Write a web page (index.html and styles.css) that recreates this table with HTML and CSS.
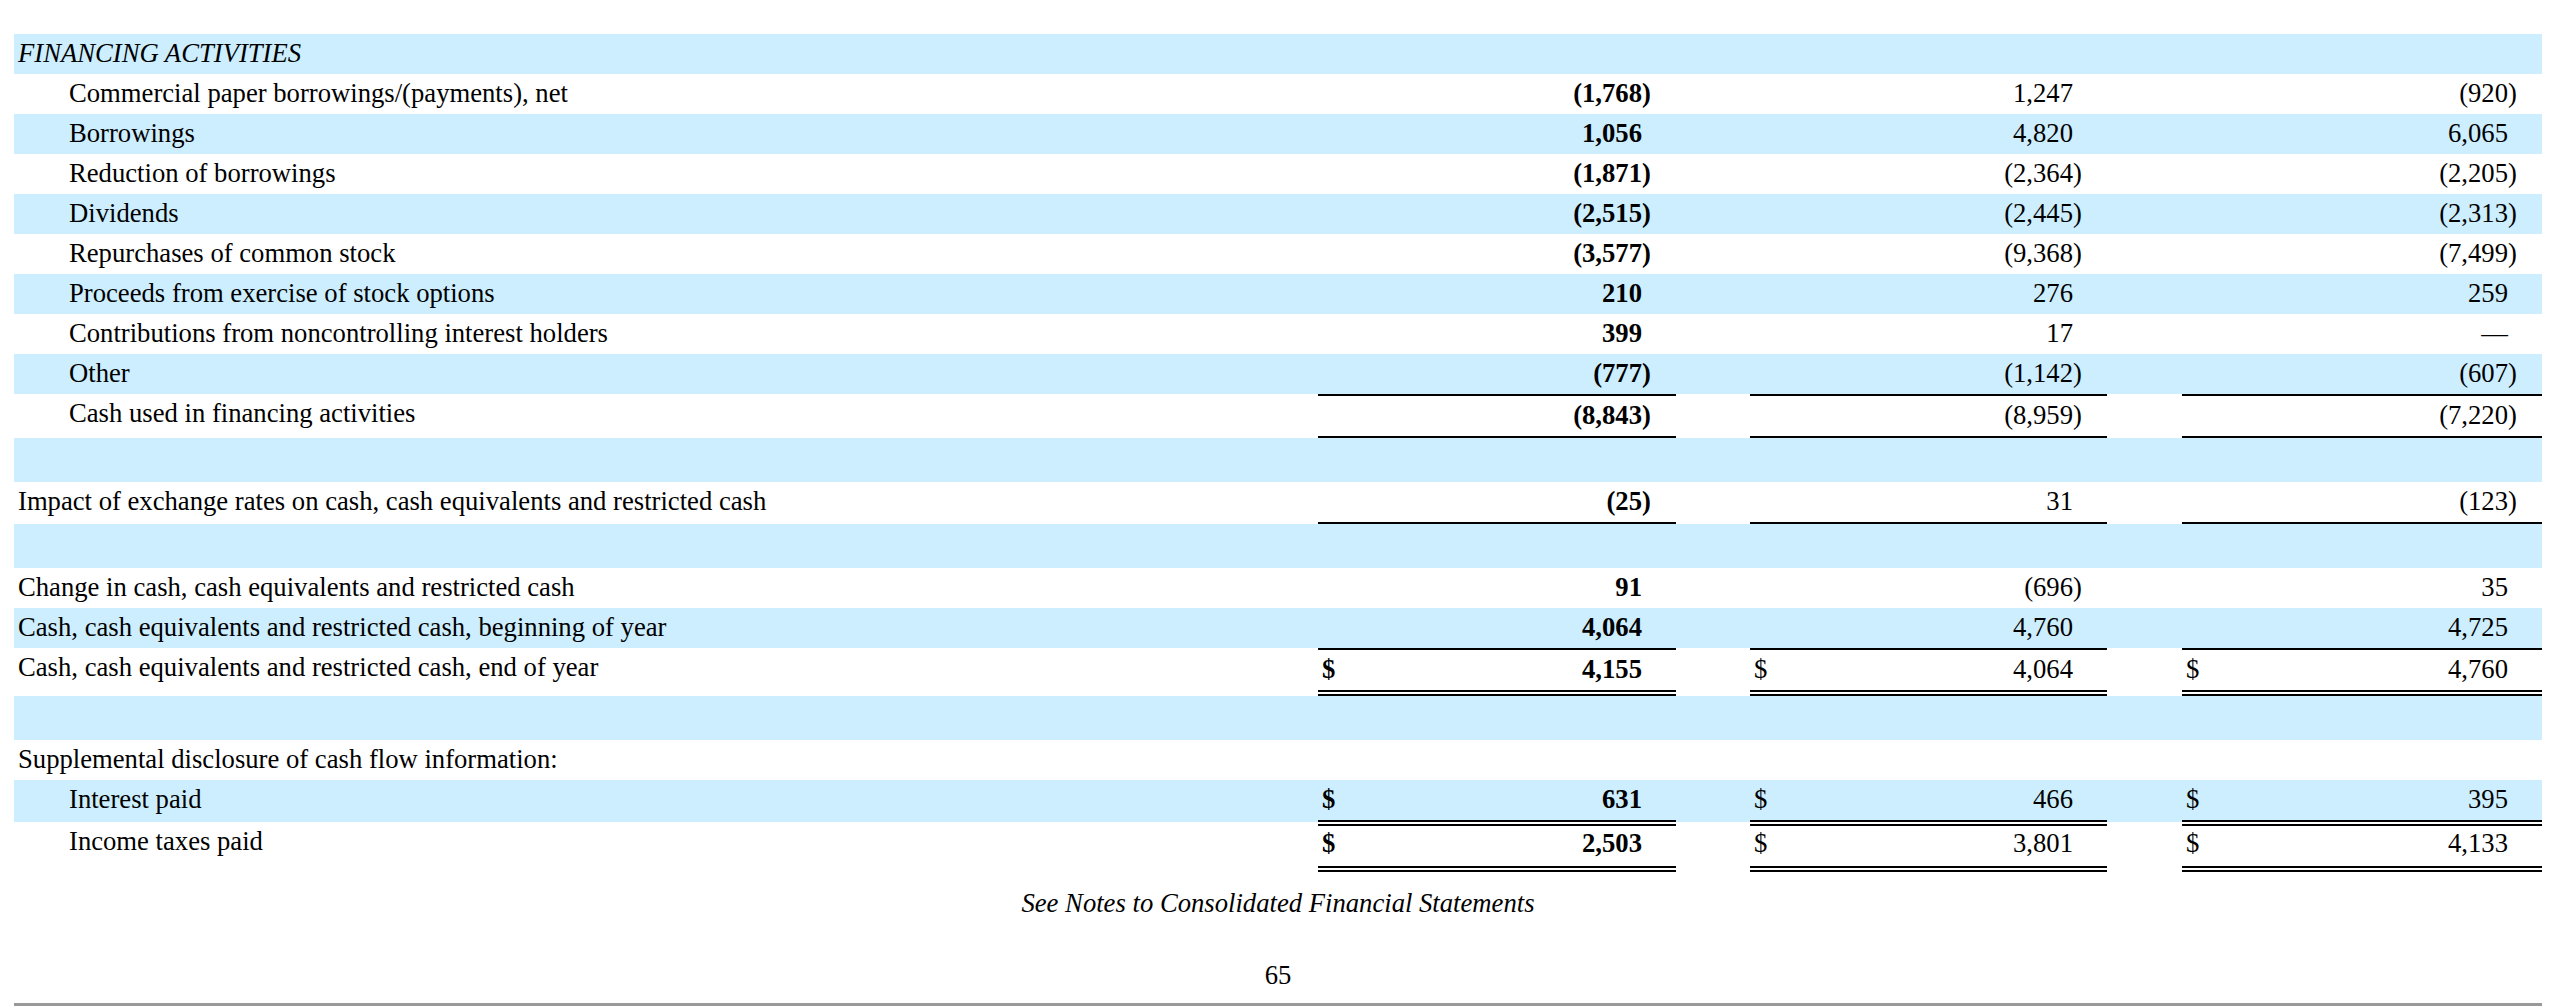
FILE: index.html
```html
<!DOCTYPE html>
<html lang="en">
<head>
<meta charset="utf-8">
<title>Consolidated Statements of Cash Flows (continued)</title>
<link rel="stylesheet" href="styles.css">
</head>
<body>
<div class="page">
  <table class="fin">
    <colgroup>
      <col class="w-lbl">
      <col class="w-cur"><col class="w-num1"><col class="w-par">
      <col class="w-gap1">
      <col class="w-cur"><col class="w-num2"><col class="w-par">
      <col class="w-gap2">
      <col class="w-cur"><col class="w-num3"><col class="w-par">
    </colgroup>
    <tbody>
      <tr class="b">
        <td class="lbl it">FINANCING ACTIVITIES</td>
        <td class="cur"></td><td class="num"></td><td class="par"></td><td></td>
        <td class="cur"></td><td class="num"></td><td class="par"></td><td></td>
        <td class="cur"></td><td class="num"></td><td class="par"></td>
      </tr>
      <tr>
        <td class="lbl ind">Commercial paper borrowings/(payments), net</td>
        <td class="cur cy"></td><td class="num cy">(1,768</td><td class="par cy">)</td><td></td>
        <td class="cur"></td><td class="num">1,247</td><td class="par"></td><td></td>
        <td class="cur"></td><td class="num">(920</td><td class="par">)</td>
      </tr>
      <tr class="b">
        <td class="lbl ind">Borrowings</td>
        <td class="cur cy"></td><td class="num cy">1,056</td><td class="par cy"></td><td></td>
        <td class="cur"></td><td class="num">4,820</td><td class="par"></td><td></td>
        <td class="cur"></td><td class="num">6,065</td><td class="par"></td>
      </tr>
      <tr>
        <td class="lbl ind">Reduction of borrowings</td>
        <td class="cur cy"></td><td class="num cy">(1,871</td><td class="par cy">)</td><td></td>
        <td class="cur"></td><td class="num">(2,364</td><td class="par">)</td><td></td>
        <td class="cur"></td><td class="num">(2,205</td><td class="par">)</td>
      </tr>
      <tr class="b">
        <td class="lbl ind">Dividends</td>
        <td class="cur cy"></td><td class="num cy">(2,515</td><td class="par cy">)</td><td></td>
        <td class="cur"></td><td class="num">(2,445</td><td class="par">)</td><td></td>
        <td class="cur"></td><td class="num">(2,313</td><td class="par">)</td>
      </tr>
      <tr>
        <td class="lbl ind">Repurchases of common stock</td>
        <td class="cur cy"></td><td class="num cy">(3,577</td><td class="par cy">)</td><td></td>
        <td class="cur"></td><td class="num">(9,368</td><td class="par">)</td><td></td>
        <td class="cur"></td><td class="num">(7,499</td><td class="par">)</td>
      </tr>
      <tr class="b">
        <td class="lbl ind">Proceeds from exercise of stock options</td>
        <td class="cur cy"></td><td class="num cy">210</td><td class="par cy"></td><td></td>
        <td class="cur"></td><td class="num">276</td><td class="par"></td><td></td>
        <td class="cur"></td><td class="num">259</td><td class="par"></td>
      </tr>
      <tr>
        <td class="lbl ind">Contributions from noncontrolling interest holders</td>
        <td class="cur cy"></td><td class="num cy">399</td><td class="par cy"></td><td></td>
        <td class="cur"></td><td class="num">17</td><td class="par"></td><td></td>
        <td class="cur"></td><td class="num">&mdash;</td><td class="par"></td>
      </tr>
      <tr class="b">
        <td class="lbl ind">Other</td>
        <td class="cur cy"></td><td class="num cy">(777</td><td class="par cy">)</td><td></td>
        <td class="cur"></td><td class="num">(1,142</td><td class="par">)</td><td></td>
        <td class="cur"></td><td class="num">(607</td><td class="par">)</td>
      </tr>
      <tr class="tot">
        <td class="lbl ind">Cash used in financing activities</td>
        <td class="cur cy"></td><td class="num cy">(8,843</td><td class="par cy">)</td><td></td>
        <td class="cur"></td><td class="num">(8,959</td><td class="par">)</td><td></td>
        <td class="cur"></td><td class="num">(7,220</td><td class="par">)</td>
      </tr>
      <tr class="b gap">
        <td class="lbl"></td>
        <td></td><td></td><td></td><td></td><td></td><td></td><td></td><td></td><td></td><td></td><td></td>
      </tr>
      <tr class="und">
        <td class="lbl">Impact of exchange rates on cash, cash equivalents and restricted cash</td>
        <td class="cur cy"></td><td class="num cy">(25</td><td class="par cy">)</td><td></td>
        <td class="cur"></td><td class="num">31</td><td class="par"></td><td></td>
        <td class="cur"></td><td class="num">(123</td><td class="par">)</td>
      </tr>
      <tr class="b gap">
        <td class="lbl"></td>
        <td></td><td></td><td></td><td></td><td></td><td></td><td></td><td></td><td></td><td></td><td></td>
      </tr>
      <tr>
        <td class="lbl">Change in cash, cash equivalents and restricted cash</td>
        <td class="cur cy"></td><td class="num cy">91</td><td class="par cy"></td><td></td>
        <td class="cur"></td><td class="num">(696</td><td class="par">)</td><td></td>
        <td class="cur"></td><td class="num">35</td><td class="par"></td>
      </tr>
      <tr class="b">
        <td class="lbl">Cash, cash equivalents and restricted cash, beginning of year</td>
        <td class="cur cy"></td><td class="num cy">4,064</td><td class="par cy"></td><td></td>
        <td class="cur"></td><td class="num">4,760</td><td class="par"></td><td></td>
        <td class="cur"></td><td class="num">4,725</td><td class="par"></td>
      </tr>
      <tr class="eoy">
        <td class="lbl">Cash, cash equivalents and restricted cash, end of year</td>
        <td class="cur cy">$</td><td class="num cy">4,155</td><td class="par cy"></td><td></td>
        <td class="cur">$</td><td class="num">4,064</td><td class="par"></td><td></td>
        <td class="cur">$</td><td class="num">4,760</td><td class="par"></td>
      </tr>
      <tr class="b gap">
        <td class="lbl"></td>
        <td></td><td></td><td></td><td></td><td></td><td></td><td></td><td></td><td></td><td></td><td></td>
      </tr>
      <tr>
        <td class="lbl">Supplemental disclosure of cash flow information:</td>
        <td></td><td></td><td></td><td></td><td></td><td></td><td></td><td></td><td></td><td></td><td></td>
      </tr>
      <tr class="b int">
        <td class="lbl ind">Interest paid</td>
        <td class="cur cy">$</td><td class="num cy">631</td><td class="par cy"></td><td></td>
        <td class="cur">$</td><td class="num">466</td><td class="par"></td><td></td>
        <td class="cur">$</td><td class="num">395</td><td class="par"></td>
      </tr>
      <tr class="inc">
        <td class="lbl ind">Income taxes paid</td>
        <td class="cur cy">$</td><td class="num cy">2,503</td><td class="par cy"></td><td></td>
        <td class="cur">$</td><td class="num">3,801</td><td class="par"></td><td></td>
        <td class="cur">$</td><td class="num">4,133</td><td class="par"></td>
      </tr>
    </tbody>
  </table>
  <p class="note">See Notes to Consolidated Financial Statements</p>
  <p class="pgno">65</p>
  <hr class="rule">
</div>
</body>
</html>
```

FILE: styles.css
```css
* {
  box-sizing: border-box;
}

body {
  margin: 0;
  background: #ffffff;
  color: #000000;
  font-family: "Liberation Serif", "Times New Roman", Times, serif;
  font-size: 26.67px;
}

.page {
  padding: 34px 16px 0 14px;
}

/* table */
.fin {
  width: 2528px;
  border-collapse: separate;
  border-spacing: 0;
  table-layout: fixed;
}

.w-lbl { width: 1304px; }
.w-cur { width: 30px; }
.w-num1 { width: 294px; }
.w-num2 { width: 293px; }
.w-num3 { width: 296px; }
.w-par { width: 34px; }
.w-gap1 { width: 74px; }
.w-gap2 { width: 75px; }

.fin tr {
  height: 40px;
}

.fin tr.b {
  background: #cceeff;
}

.fin td {
  padding: 4px 0 0 0;
  vertical-align: top;
  line-height: 30px;
  white-space: nowrap;
}

.fin td.lbl {
  padding-left: 4px;
}

.fin td.ind {
  padding-left: 55px;
}

.fin td.it {
  font-style: italic;
}

.fin td.cur {
  padding-left: 4px;
  text-align: left;
}

.fin td.num {
  text-align: right;
}

.fin td.par {
  text-align: left;
}

.fin td.cy {
  font-weight: bold;
}

/* blank spacer rows */
.fin tr.gap {
  height: 44px;
}

/* subtotal: rule above and below */
.fin tr.tot {
  height: 44px;
}
.fin tr.tot td.cur,
.fin tr.tot td.num,
.fin tr.tot td.par {
  border-top: 2px solid #000;
  border-bottom: 2px solid #000;
}

/* single underline */
.fin tr.und {
  height: 42px;
}
.fin tr.und td.cur,
.fin tr.und td.num,
.fin tr.und td.par {
  border-bottom: 2px solid #000;
}

/* end of year: rule above, double rule below */
.fin tr.eoy {
  height: 48px;
}
.fin tr.eoy td.cur,
.fin tr.eoy td.num,
.fin tr.eoy td.par {
  border-top: 2px solid #000;
  border-bottom: 6px double #000;
}

/* interest paid: first stroke of the double rule */
.fin tr.int {
  height: 42px;
}
.fin tr.int td.cur,
.fin tr.int td.num,
.fin tr.int td.par {
  border-bottom: 2px solid #000;
}

/* income taxes paid: second stroke above, double rule below */
.fin tr.inc {
  height: 50px;
}
.fin tr.inc td.cur,
.fin tr.inc td.num,
.fin tr.inc td.par {
  border-top: 2px solid #ffffff;
  box-shadow: inset 0 2px 0 #000;
  padding-top: 4px;
  border-bottom: 6px double #000;
}

/* footer */
.note {
  margin: 16px 0 0 0;
  text-align: center;
  font-style: italic;
  line-height: 30px;
}

.pgno {
  margin: 42px 0 0 0;
  text-align: center;
  line-height: 30px;
}

.rule {
  margin: 13px 0 0 0;
  border: 0;
  height: 3px;
  background: #999999;
}
```
